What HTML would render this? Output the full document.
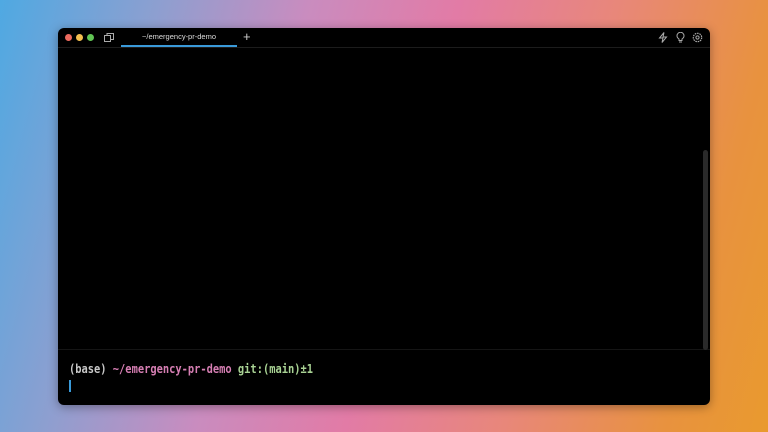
<!DOCTYPE html>
<html><head><meta charset="utf-8"><style>
html,body{margin:0;width:768px;height:432px;overflow:hidden}
body{background:linear-gradient(105deg,#4fa9e2 0%,#8d9fd0 18%,#c98cbf 35%,#e27ba6 52%,#e8877a 70%,#e8923f 88%,#e99a2e 100%);position:relative;font-family:"Liberation Sans",sans-serif}
.win{position:absolute;left:58px;top:28px;width:652px;height:377px;background:#000;border-radius:6px;box-shadow:0 2px 10px rgba(0,0,0,.35);overflow:hidden}
.bar{position:absolute;left:0;top:0;right:0;height:19px;border-bottom:1px solid #1c1c1c}
.dot{position:absolute;top:6px;width:7px;height:7px;border-radius:50%}
.tab{position:absolute;left:63px;top:0;width:116px;height:19px;border-bottom:2px solid #3a9ad9;box-sizing:border-box;color:#ddd;font-size:7.5px;text-align:center;line-height:18px}
.plus{position:absolute;left:185px;top:1px;color:#ccc;font-size:13px;line-height:16px}
.sep{position:absolute;left:0;right:0;top:321px;height:1px;background:#151515}
.sb{position:absolute;left:645px;top:122px;width:5px;height:200px;background:#2a2a2a;border-radius:3px}
.prompt{position:absolute;left:11px;top:334px;font-family:"DejaVu Sans Mono","Liberation Mono",monospace;font-size:10.4px;font-weight:bold;white-space:pre;color:#c8c8c8;transform:scaleY(1.2);transform-origin:left top}
.cur{position:absolute;left:11px;top:352px;width:2px;height:12px;background:#3a9ad9}
</style></head><body>
<div class="win">
<div class="bar">
<div class="dot" style="left:7px;background:#ec6a5e"></div>
<div class="dot" style="left:18px;background:#f4bf4f"></div>
<div class="dot" style="left:29px;background:#61c554"></div>
<svg style="position:absolute;left:46px;top:5px" width="10" height="9" viewBox="0 0 10 9"><rect x="0.5" y="2.5" width="6" height="6" fill="none" stroke="#aaa"/><path d="M3 2.5V0.5H9.5V6.5H6.5" fill="none" stroke="#aaa"/></svg>
<div class="tab">~/emergency-pr-demo</div>
<div class="plus">+</div>
<svg style="position:absolute;left:600px;top:4px" width="10" height="11" viewBox="0 0 10 11"><path d="M6 0.5L1.5 6H5L4 10.5L8.5 5H5Z" fill="none" stroke="#aaa" stroke-width="1"/></svg>
<svg style="position:absolute;left:618px;top:4px" width="9" height="11" viewBox="0 0 9 11"><path d="M3 8.5V7Q1 5.8 1 3.8A3.5 3.5 0 0 1 8 3.8Q8 5.8 6 7V8.5ZM3 10H6" fill="none" stroke="#aaa"/></svg>
<svg style="position:absolute;left:634px;top:4px" width="11" height="11" viewBox="0 0 11 11"><circle cx="5.5" cy="5.5" r="4.2" fill="none" stroke="#aaa" stroke-width="1.2" stroke-dasharray="1.6 0.8"/><circle cx="5.5" cy="5.5" r="1.6" fill="none" stroke="#aaa"/></svg>
</div>
<div class="sep"></div>
<div class="sb"></div>
<div class="prompt">(base) <span style="color:#d77fb4">~/emergency-pr-demo</span> <span style="color:#a9d394">git:(main)±1</span></div>
<div class="cur"></div>
</div>
</body></html>
